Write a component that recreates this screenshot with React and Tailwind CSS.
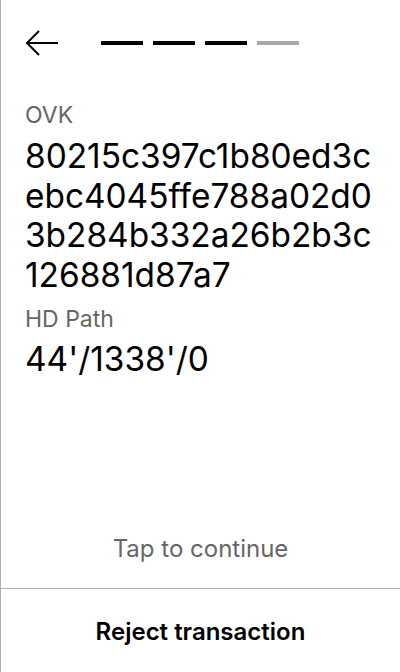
export default function App() {
  const steps = [true, true, true, false];
  const ovk = ["80215c397c1b80ed3c", "ebc4045ffe788a02d0", "3b284b332a26b2b3c", "126881d87a7"];

  return (
    <div
      className="flex h-[672px] w-[400px] flex-col border-l border-[#b0b0b0] bg-white text-black"
      style={{ fontFamily: "Inter, 'Noto Sans', sans-serif" }}
    >
      {/* Header */}
      <div className="flex items-center pl-6 pt-[29px]">
        <svg width="34" height="28" viewBox="0 0 34 28" fill="none" stroke="black" strokeWidth="2">
          <path d="M33 14H2" />
          <path d="M14 2L2 14l12 12" />
        </svg>
        <div className="ml-[42px] flex gap-[10px]">
          {steps.map((done, i) => (
            <div key={i} className={`h-1 w-[42px] ${done ? "bg-black" : "bg-[#aaaaaa]"}`} />
          ))}
        </div>
      </div>

      {/* Content */}
      <div className="flex flex-1 flex-col px-6 pt-[43px]">
        <div className="text-[23px] leading-[30px] text-[#666666]">OVK</div>
        <div className="mt-[7px] text-[33.4px] leading-[39.5px]">
          {ovk.map((line) => (
            <div key={line}>{line}</div>
          ))}
        </div>
        <div className="mt-[9px] text-[23px] leading-[30px] text-[#666666]">HD Path</div>
        <div className="mt-[6px] text-[33.4px] leading-[39.5px]">44'/1338'/0</div>

        <div className="mt-auto pb-[21px] text-center text-[24px] text-[#666666]">Tap to continue</div>
      </div>

      {/* Footer */}
      <div className="flex h-[84px] items-center justify-center border-t border-[#b0b0b0] pt-[2px] text-[24px] font-semibold">
        Reject transaction
      </div>
    </div>
  );
}
